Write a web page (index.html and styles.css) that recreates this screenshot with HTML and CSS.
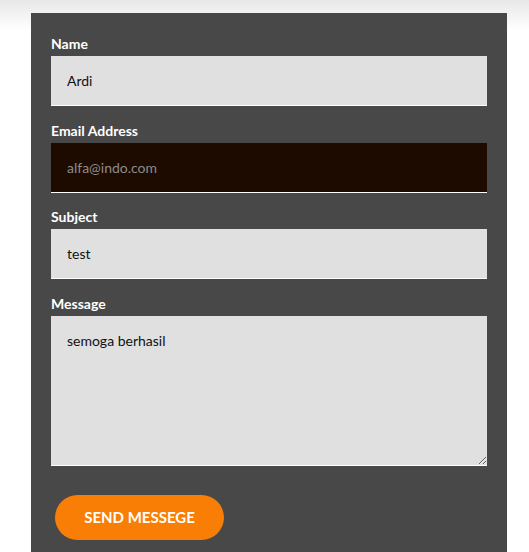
FILE: index.html
```html
<!DOCTYPE html>
<html lang="en">
<head>
  <meta charset="UTF-8">
  <title>Contact</title>
  <link rel="stylesheet" href="styles.css">
</head>
<body>
  <div class="contact">
    <form class="contact-form">
      <!-- Name -->
      <div class="field">
        <label for="name">Name</label>
        <input type="text" id="name" value="Ardi">
      </div>

      <!-- Email -->
      <div class="field">
        <label for="email">Email Address</label>
        <input type="text" id="email" class="dark" value="alfa@indo.com">
      </div>

      <!-- Subject -->
      <div class="field">
        <label for="subject">Subject</label>
        <input type="text" id="subject" value="test">
      </div>

      <!-- Message -->
      <div class="field last">
        <label for="message">Message</label>
        <textarea id="message">semoga berhasil</textarea>
      </div>

      <button type="button">Send Messege</button>
    </form>
  </div>
</body>
</html>
```

FILE: styles.css
```css
body {
  margin: 0;
  min-height: 100vh;
  background: linear-gradient(#e8e8e8, #fff 30px) no-repeat, #fff;
  font-family: Lato, "Open Sans", sans-serif;
}
.contact {
  width: 436px;
  margin: 13px 0 0 31px;
  padding: 22px 20px 30px;
  background: #484848;
}
.field {
  margin-bottom: 15.5px;
}
.field.last {
  margin-bottom: 0;
}
label {
  display: block;
  margin-bottom: 3px;
  color: #fff;
  font-size: 14px;
  font-weight: bold;
  line-height: 18px;
}
input[type="text"],
textarea {
  display: block;
  box-sizing: border-box;
  width: 100%;
  margin: 0;
  padding: 0 16px;
  border: none;
  border-bottom: 1px solid #fff;
  border-radius: 0;
  background: #e0e0e0;
  color: #111;
  font-family: inherit;
  font-size: 14px;
  outline: none;
}
input[type="text"] {
  height: 50px;
}
input.dark {
  background: #1e0b00;
  color: #8c8c8c;
}
textarea {
  height: 150px;
  padding: 16px;
  line-height: 17px;
}
button {
  display: block;
  width: 169px;
  height: 45px;
  margin: 29px 0 0 4px;
  border: none;
  border-radius: 23px;
  background: #f97e06;
  color: #fff;
  font-family: inherit;
  font-size: 15px;
  font-weight: bold;
  text-transform: uppercase;
  cursor: pointer;
}
```
